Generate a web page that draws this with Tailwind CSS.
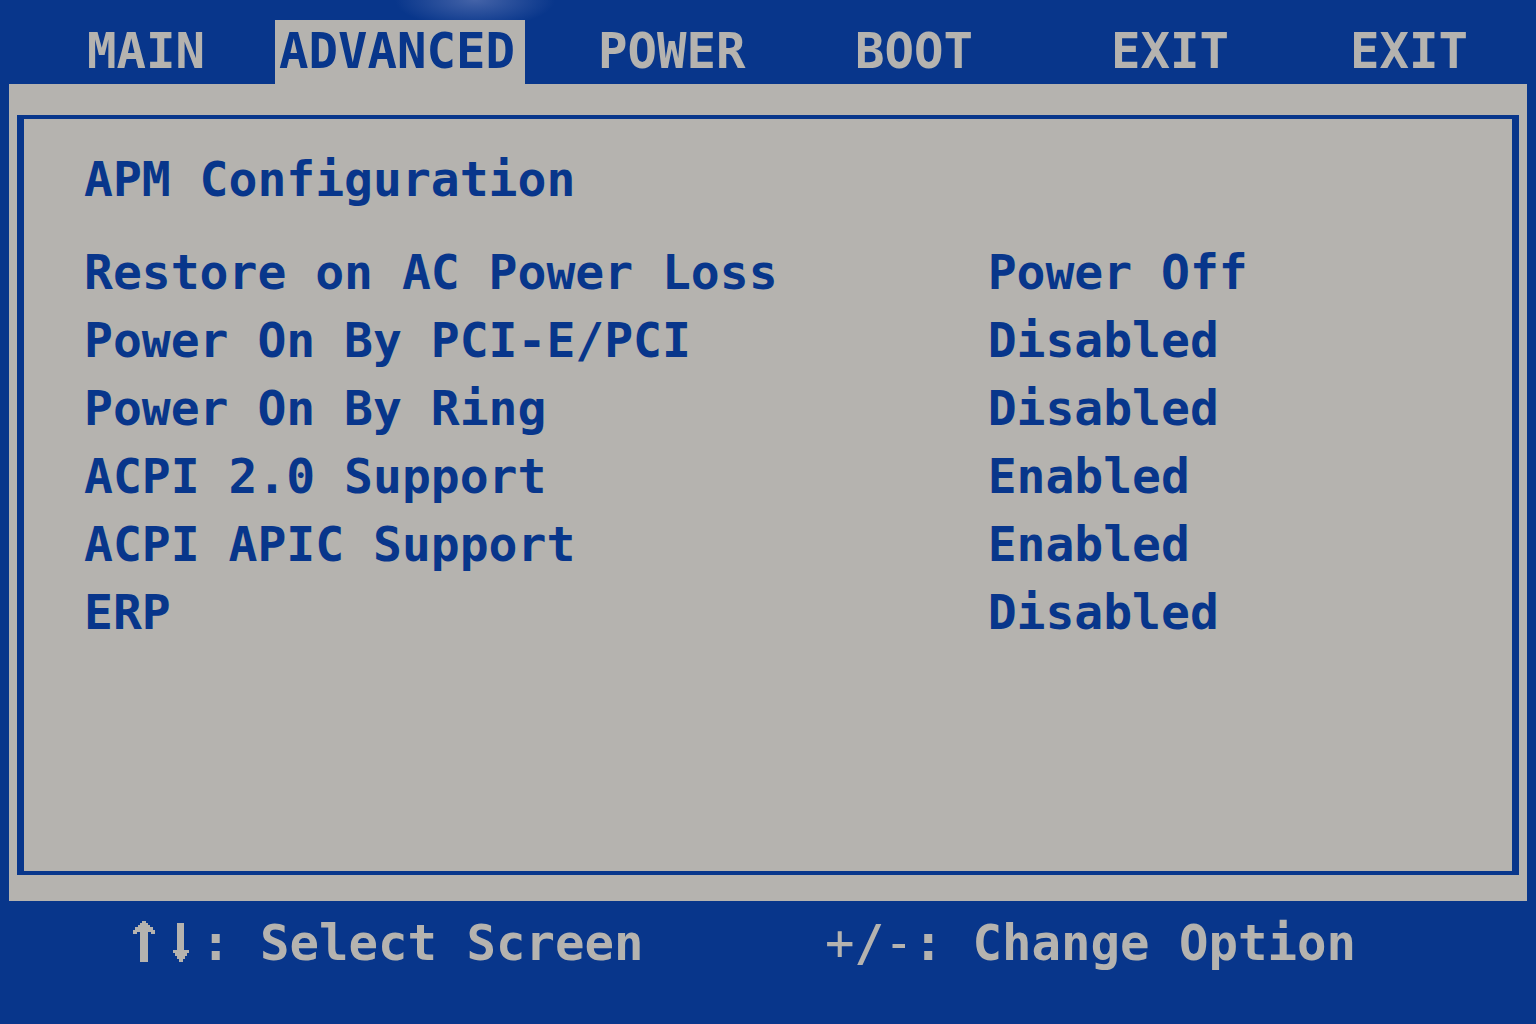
<!DOCTYPE html>
<html lang="en">

<head>
    <meta charset="UTF-8" />
    <meta name="viewport" content="width=device-width, initial-scale=1.0" />
    <title>BIOS Setup - Advanced</title>
    <script src="https://cdn.jsdelivr.net/npm/@tailwindcss/browser@4"></script>
</head>

<body class="min-h-screen flex flex-col bg-[#08368b] text-[#b5b3af] text-[49px] font-bold font-['DejaVu_Sans_Mono',monospace]">

    <!-- Menu tabs -->
    <nav class="grid grid-cols-[192fr_319fr_257fr_256fr_239fr_190fr] pt-5 pl-[83px] leading-[64px] bg-[radial-gradient(ellipse_80px_28px_at_475px_0px,#4463a8,transparent)]">
        <a href="#main" class="justify-self-start px-1">MAIN</a>
        <a href="#advanced" class="justify-self-start pl-1 pr-2.5 bg-[#b5b3af] text-[#08368b]">ADVANCED</a>
        <a href="#power" class="justify-self-start px-1">POWER</a>
        <a href="#boot" class="justify-self-start px-1">BOOT</a>
        <a href="#exit" class="justify-self-start px-1">EXIT</a>
        <a href="#exit" class="justify-self-start px-1">EXIT</a>
    </nav>

    <!-- Settings panel -->
    <main class="flex-1 flex flex-col mx-[9px] px-2 pt-[31px] pb-[26px] bg-[#b5b3af] text-[#08368b]">
        <section class="flex-1 border-x-[7px] border-y-4 border-[#08368b] pl-[60px] pt-[26px] text-[48px] leading-[68px]">
            <h1 class="mb-[25px]">APM Configuration</h1>
            <table class="w-full table-fixed text-left">
                <tbody>
                    <tr>
                        <th scope="row" class="w-[63%] p-0">Restore on AC Power Loss</th>
                        <td class="p-0 pl-1">Power Off</td>
                    </tr>
                    <tr>
                        <th scope="row" class="p-0">Power On By PCI-E/PCI</th>
                        <td class="p-0 pl-1">Disabled</td>
                    </tr>
                    <tr>
                        <th scope="row" class="p-0">Power On By Ring</th>
                        <td class="p-0 pl-1">Disabled</td>
                    </tr>
                    <tr>
                        <th scope="row" class="p-0">ACPI 2.0 Support</th>
                        <td class="p-0 pl-1">Enabled</td>
                    </tr>
                    <tr>
                        <th scope="row" class="p-0">ACPI APIC Support</th>
                        <td class="p-0 pl-1">Enabled</td>
                    </tr>
                    <tr>
                        <th scope="row" class="p-0">ERP</th>
                        <td class="p-0 pl-1">Disabled</td>
                    </tr>
                </tbody>
            </table>
        </section>
    </main>

    <!-- Key hints -->
    <footer class="grid grid-cols-[692fr_711fr] pl-[133px] pt-[9px] pb-[46px] leading-[68px]">
        <p class="flex items-center">
            <svg class="w-[22px] h-[46px] mr-[18px]" viewBox="0 0 22 46" fill="currentColor" shape-rendering="crispEdges" aria-label="Up">
                <path d="M9 0h4v2h2v2h2v2h3v3h2v4h-4v-2h-3v30H7V11H4v2H0V9h2V6h3V4h2V2h2z" />
            </svg>
            <svg class="w-4 h-[42px] mr-3" viewBox="0 0 16 42" fill="currentColor" shape-rendering="crispEdges" aria-label="Down">
                <path d="M4 0h7v27h5v3h-2v3h-2v3h-2v3H6v-3H4v-3H2v-3H0v-3h4z" />
            </svg>
            <span>: Select Screen</span>
        </p>
        <p><span class="font-normal">+</span>/<span class="font-normal">-</span>: Change Option</p>
    </footer>

</body>

</html>
